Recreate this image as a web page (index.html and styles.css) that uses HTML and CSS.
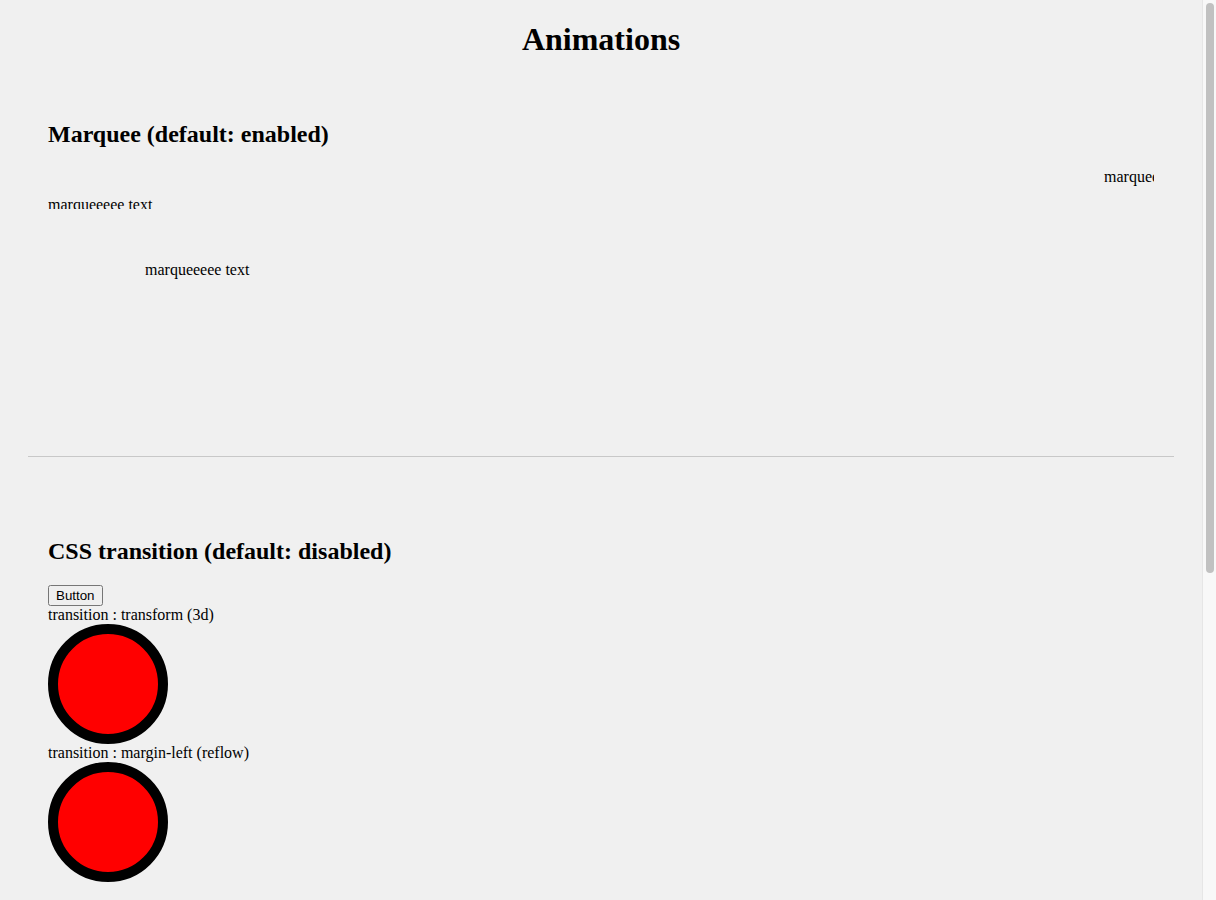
FILE: index.html
```html
<!DOCTYPE html>
<html>
<head>
<meta charset="utf-8">
<title>Animations</title>
<link rel="stylesheet" href="styles.css">
</head>
<body>
<div class="viewport">
  <h1 class="title">Animations</h1>
  <div class="page">
    <section class="section marquee-section">
      <h2 class="section-title">Marquee (default: enabled)</h2>
      <div class="marquee marquee-right"><span class="marquee-text">marqueeeee text</span></div>
      <div class="marquee marquee-up"><span class="marquee-text">marqueeeee text</span></div>
      <div class="marquee marquee-alt"><span class="marquee-text">marqueeeee text</span></div>
    </section>
    <hr class="divider">
    <section class="section transition-section">
      <h2 class="section-title">CSS transition (default: disabled)</h2>
      <button class="btn" type="button">Button</button>
      <div class="label">transition : transform (3d)</div>
      <div class="ball"></div>
      <div class="label">transition : margin-left (reflow)</div>
      <div class="ball"></div>
    </section>
  </div>
</div>
<div class="scrollbar" aria-hidden="true">
  <div class="scrollbar-thumb"></div>
</div>
</body>
</html>
```
FILE: styles.css
```css
html,
body {
  margin: 0;
  height: 100%;
  overflow: hidden;
  background: #f0f0f0;
}
body {
  display: flex;
  font-family: "Liberation Serif", "Times New Roman", serif;
  font-size: 16px;
  color: #000;
}
.viewport {
  flex: 1;
  min-width: 0;
  height: 100vh;
  overflow: hidden;
}
.scrollbar {
  width: 14px;
  flex: none;
  height: 100vh;
  background: #f8f8f8;
  border-left: 1px solid #e6e6e6;
  padding: 3px 3px 0 3px;
  box-sizing: border-box;
}
.scrollbar-thumb {
  width: 8px;
  height: 570px;
  background: #c1c1c1;
  border-radius: 4px;
}
.title {
  font-size: 32px;
  font-weight: bold;
  text-align: center;
  margin: 0;
  padding: 21px 0 22px;
  line-height: 37px;
}
.page {
  padding: 0 28px;
}
.section {
  padding: 20px;
}
.section-title {
  font-size: 24px;
  font-weight: bold;
  margin: 20px 0 20px;
  line-height: 28px;
}
.marquee {
  overflow: hidden;
  white-space: nowrap;
}
.marquee-text {
  display: inline-block;
  line-height: 18px;
}
.marquee-right {
  height: 18px;
}
.marquee-right .marquee-text {
  margin-left: 1056px;
}
.marquee-up {
  height: 23px;
}
.marquee-up .marquee-text {
  margin-top: 10px;
}
.marquee-alt {
  height: 220px;
}
.marquee-alt .marquee-text {
  margin-left: 97px;
  margin-top: 52px;
}
.divider {
  border: none;
  border-top: 1px solid #c8c8c8;
  margin: 7px 0 0;
  height: 0;
}
.transition-section {
  padding-top: 60px;
  padding-bottom: 540px;
}
.btn {
  font-family: "Liberation Sans", Arial, sans-serif;
  font-size: 13.333px;
  display: block;
  margin: 0;
}
.label {
  line-height: 18px;
}
.ball {
  width: 100px;
  height: 100px;
  border: 10px solid #000;
  border-radius: 50%;
  background: #ff0000;
}
```
